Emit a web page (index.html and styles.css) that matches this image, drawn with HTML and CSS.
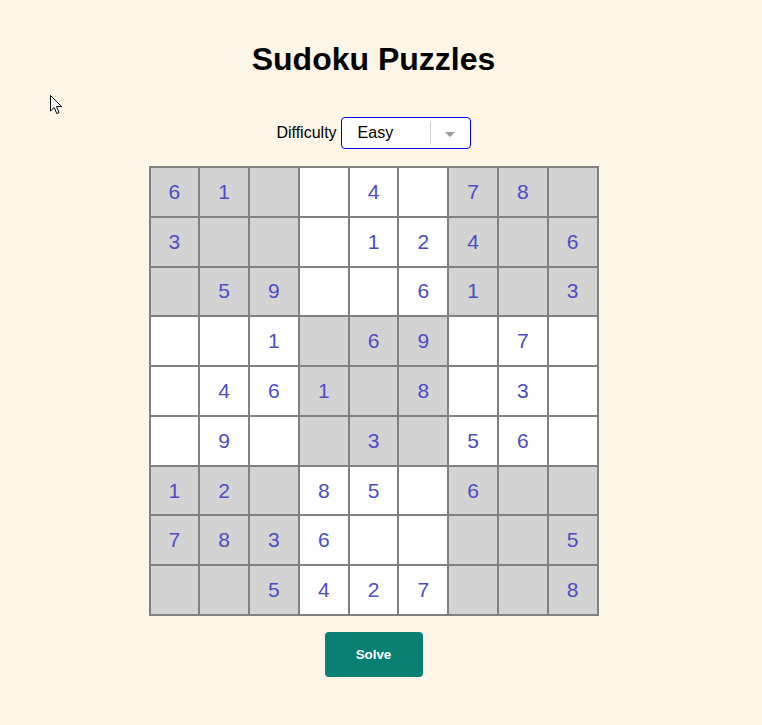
FILE: index.html
```html
<!DOCTYPE html>
<html lang="en">
<head>
<meta charset="utf-8">
<title>Sudoku Puzzles</title>
<link rel="stylesheet" href="styles.css">
</head>
<body>
<div class="app">
  <h1 class="title">Sudoku Puzzles</h1>
  <div class="controls">
    <span class="label">Difficulty</span>
    <div class="select">
      <span class="select-value">Easy</span>
      <span class="select-sep"></span>
      <span class="select-arrow"></span>
    </div>
  </div>
  <div class="board" id="board"></div>
  <button class="solve">Solve</button>
</div>
<svg class="cursor" width="13" height="20" viewBox="0 0 13 20"><path d="M0.5 0.5 L0.5 16 L4.2 12.4 L6.8 18.6 L9 17.6 L6.5 11.6 L11.6 11.6 Z" fill="#fff" stroke="#000" stroke-width="1" stroke-linejoin="miter"/></svg>
<script>
var grid = [
  "61  4 78 ",
  "3   124 6",
  " 59  61 3",
  "  1 69 7 ",
  " 461 8 3 ",
  " 9  3 56 ",
  "12 85 6  ",
  "7836    5",
  "  5427  8"
];
var board = document.getElementById('board');
for (var r = 0; r < 9; r++) {
  for (var c = 0; c < 9; c++) {
    var cell = document.createElement('div');
    var box = Math.floor(r / 3) * 3 + Math.floor(c / 3);
    cell.className = 'cell' + (box % 2 === 0 ? ' shaded' : '');
    var ch = grid[r][c];
    cell.textContent = ch === ' ' ? '' : ch;
    board.appendChild(cell);
  }
}
</script>
</body>
</html>
```
FILE: styles.css
```css
html, body {
  margin: 0;
  padding: 0;
  background: #fdf5e6;
}
body {
  font-family: "Liberation Sans", Arial, sans-serif;
  color: #000;
}
.app {
  width: 747px;
  padding-top: 41px;
  display: flex;
  flex-direction: column;
  align-items: center;
}
.title {
  margin: 0;
  font-size: 32px;
  font-weight: bold;
  line-height: 36px;
}
.controls {
  margin-top: 40px;
  display: flex;
  align-items: center;
  gap: 4px;
  font-size: 16px;
}
.select {
  box-sizing: border-box;
  width: 130px;
  height: 32px;
  border: 1px solid #0000ee;
  border-radius: 4px;
  background: #fff;
  display: flex;
  align-items: center;
}
.select-value {
  flex: 1;
  padding-left: 16px;
}
.select-sep {
  width: 1px;
  height: 22px;
  background: #cccccc;
}
.select-arrow {
  width: 39px;
  display: flex;
  justify-content: center;
}
.select-arrow::before {
  content: "";
  border-left: 5px solid transparent;
  border-right: 5px solid transparent;
  border-top: 5px solid #999;
  margin-top: 2px;
}
.board {
  box-sizing: border-box;
  margin-top: 17px;
  width: 450px;
  height: 450px;
  border: 1px solid #808080;
  display: grid;
  grid-template-columns: repeat(9, 1fr);
  grid-template-rows: repeat(9, 1fr);
}
.cell {
  border: 1px solid #808080;
  background: #fff;
  display: flex;
  align-items: center;
  justify-content: center;
  font-size: 21px;
  color: #4c4cc6;
}
.cell.shaded {
  background: #d3d3d3;
}
.solve {
  margin-top: 16px;
  width: 98px;
  height: 45px;
  border: none;
  border-radius: 4px;
  background: #087f73;
  color: #fff;
  font-family: "Liberation Sans", Arial, sans-serif;
  font-weight: bold;
  font-size: 13.33px;
}
.cursor {
  position: absolute;
  left: 50px;
  top: 95px;
}
```
